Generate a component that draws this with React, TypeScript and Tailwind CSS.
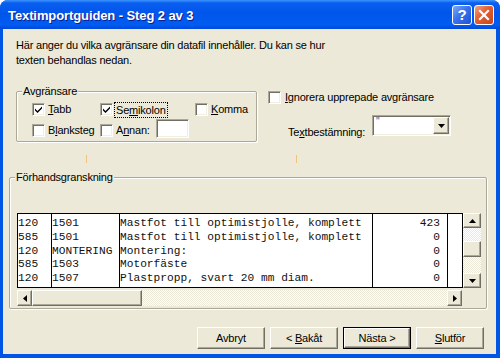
import React from "react";

const raised =
  "border border-t-white border-l-white border-r-[#716F64] border-b-[#716F64] shadow-[inset_-1px_-1px_0_#ACA899] bg-[#ECE9D8]";
const sunken =
  "border border-t-[#ACA899] border-l-[#ACA899] border-r-white border-b-white shadow-[inset_1px_1px_0_#716F64,inset_-1px_-1px_0_#F1EFE2] bg-white";
const track =
  "bg-[repeating-conic-gradient(#ffffff_0_25%,#ECE9D8_0_50%)] bg-[length:2px_2px]";

function Check({ checked }: { checked?: boolean }) {
  return (
    <span className={`w-[13px] h-[13px] shrink-0 flex items-center justify-center ${sunken}`}>
      {checked && (
        <svg width="7" height="7" viewBox="0 0 7 7">
          <path d="M0 2.5 L2.5 5 L7 0.5 L7 2.5 L2.5 7 L0 4.5 Z" fill="#000" />
        </svg>
      )}
    </span>
  );
}

function Arrow({ dir }: { dir: "up" | "down" | "left" | "right" }) {
  const p =
    dir === "up"
      ? "M0 4 L3.5 0 L7 4 Z"
      : dir === "down"
      ? "M0 0 L7 0 L3.5 4 Z"
      : dir === "left"
      ? "M4 0 L4 7 L0 3.5 Z"
      : "M0 0 L4 3.5 L0 7 Z";
  const w = dir === "up" || dir === "down" ? 7 : 4;
  const h = dir === "up" || dir === "down" ? 4 : 7;
  return (
    <svg width={w} height={h} viewBox={`0 0 ${w} ${h}`}>
      <path d={p} fill="#000" />
    </svg>
  );
}

function Btn({ children, def }: { children: React.ReactNode; def?: boolean }) {
  if (def) {
    return (
      <div className="w-[68px] h-[22px] border border-black flex">
        <div className={`flex-1 flex items-center justify-center ${raised}`}>{children}</div>
      </div>
    );
  }
  return (
    <div className={`w-[68px] h-[22px] flex items-center justify-center ${raised}`}>{children}</div>
  );
}

const rows = [
  ["120", "1501", "Mastfot till optimistjolle, komplett", "423"],
  ["585", "1501", "Mastfot till optimistjolle, komplett", "0"],
  ["120", "MONTERING", "Montering:", "0"],
  ["585", "1503", "Motorfäste", "0"],
  ["120", "1507", "Plastpropp, svart 20 mm diam.", "0"],
];

const mono =
  "font-['Liberation_Mono','Courier_New',monospace] text-[11.2px] leading-[13.75px] tracking-normal whitespace-pre pt-[3px] text-[#111]";

export default function App() {
  return (
    <div className="w-[500px] h-[358px] bg-white font-['Liberation_Sans',Arial,sans-serif] text-[11px] text-black tracking-[-0.2px]">
      <div className="w-full h-full rounded-t-[8px] overflow-hidden bg-[#0055E5] flex flex-col">
        {/* Title bar */}
        <div className="h-[29px] shrink-0 flex items-center pl-[8px] pr-[6px] bg-[linear-gradient(to_bottom,#3d95ff_0%,#0a5ff0_10%,#0056ea_45%,#005cf2_85%,#0048d8_100%)]">
          <span className="mt-[2px] text-white font-bold text-[13px] tracking-[-0.1px] [text-shadow:1px_1px_0_#0f1e8a]">
            Textimportguiden - Steg 2 av 3
          </span>
          <div className="ml-auto flex gap-[2px]">
            <div className="w-[20px] h-[20px] rounded-[3px] border border-white bg-[linear-gradient(135deg,#7eaaf9_0%,#3a72ec_45%,#1d52d9_100%)] flex items-center justify-center text-white font-bold text-[15px] leading-none tracking-normal">
              ?
            </div>
            <div className="w-[20px] h-[20px] rounded-[3px] border border-white bg-[linear-gradient(135deg,#f3a283_0%,#e35d2f_45%,#c9441c_100%)] flex items-center justify-center">
              <svg width="12" height="12" viewBox="0 0 12 12">
                <path d="M2 2 L10 10 M10 2 L2 10" stroke="#fff" strokeWidth="2.2" strokeLinecap="square" />
              </svg>
            </div>
          </div>
        </div>

        {/* Client area */}
        <div className="flex-1 ml-[3px] mr-[4px] mb-[4px] bg-[#ECE9D8] flex flex-col">
          <p className="pt-[9px] pl-[13px] leading-[15px]">
            Här anger du vilka avgränsare din datafil innehåller. Du kan se hur
            <br />
            texten behandlas nedan.
          </p>

          {/* Delimiters row */}
          <div className="flex items-start mt-[23px]">
            <div className="relative ml-[13px] w-[241px] h-[51px] border border-[#ACA899] rounded-[2px] shadow-[1px_1px_0_#fff,inset_1px_1px_0_#fff] pt-[11px] pl-[15px] flex flex-col">
              <span className="absolute left-[5px] top-[-7px] px-[1px] bg-[#ECE9D8] leading-[13px]">Avgränsare</span>
              <div className="flex items-center h-[13px]">
                <div className="w-[68px] flex items-center">
                  <Check checked />
                  <span className="ml-[3px]">
                    <span className="underline">T</span>abb
                  </span>
                </div>
                <div className="w-[95px] flex items-center">
                  <Check checked />
                  <span className="ml-[3px] outline-1 outline-dotted outline-black outline-offset-[1px] leading-[12px]">
                    Se<span className="underline">m</span>ikolon
                  </span>
                </div>
                <div className="flex items-center">
                  <Check />
                  <span className="ml-[3px]">
                    <span className="underline">K</span>omma
                  </span>
                </div>
              </div>
              <div className="flex items-center h-[13px] mt-[8px]">
                <div className="w-[68px] flex items-center">
                  <Check />
                  <span className="ml-[3px]">
                    B<span className="underline">l</span>anksteg
                  </span>
                </div>
                <div className="flex items-center">
                  <Check />
                  <span className="ml-[3px]">
                    A<span className="underline">n</span>nan:
                  </span>
                  <div className={`ml-[6px] w-[33px] h-[19px] -mt-[4px] ${sunken}`} />
                </div>
              </div>
            </div>

            <div className="ml-[11px] flex flex-col">
              <div className="flex items-center h-[13px]">
                <Check />
                <span className="ml-[4px]">
                  <span className="underline">I</span>gnorera upprepade avgränsare
                </span>
              </div>
              <div className="flex items-end mt-[11px] ml-[20px]">
                <span className="w-[84px] -mb-[3px] leading-[13px]">
                  Te<span className="underline">x</span>tbestämning:
                </span>
                <div className={`w-[79px] h-[21px] p-[1px] flex ${sunken}`}>
                  <div className="flex-1 pl-[2px] text-[#2a5ad0] text-[10px] leading-[10px] tracking-normal">"</div>
                  <div className={`w-[16px] flex items-center justify-center ${raised}`}>
                    <Arrow dir="down" />
                  </div>
                </div>
              </div>
            </div>
          </div>

          {/* tiny ticks */}
          <div className="flex h-[8px] mt-[13px]">
            <div className="ml-[83px] w-px bg-[#F3C27E]" />
            <div className="ml-[209px] w-px bg-[#F3C27E]" />
          </div>

          {/* Preview groupbox */}
          <div className="relative mt-[14px] ml-[6px] w-[478px] h-[132px] border border-[#ACA899] rounded-[2px] shadow-[1px_1px_0_#fff,inset_1px_1px_0_#fff] pt-[35px] pl-[7px] flex flex-col">
            <span className="absolute left-[5px] top-[-7px] px-[1px] bg-[#ECE9D8] leading-[13px]">Förhandsgranskning</span>
            <div className="flex h-[75px]">
              <div className="flex bg-white border-l border-t border-b border-black">
                <div className="w-[34px] border-r border-black flex flex-col">
                  <div className={mono}>
                    {rows.map((r, i) => (
                      <div key={i}>{r[0]}</div>
                    ))}
                  </div>
                </div>
                <div className="w-[68px] border-r border-black">
                  <div className={mono}>
                    {rows.map((r, i) => (
                      <div key={i}>{r[1]}</div>
                    ))}
                  </div>
                </div>
                <div className="w-[253px] border-r border-black">
                  <div className={mono}>
                    {rows.map((r, i) => (
                      <div key={i}>{r[2]}</div>
                    ))}
                  </div>
                </div>
                <div className="w-[75px] border-r border-black">
                  <div className={`${mono} text-right pr-[7px]`}>
                    {rows.map((r, i) => (
                      <div key={i}>{r[3]}</div>
                    ))}
                  </div>
                </div>
                <div className="w-[15px] border-r border-black" />
              </div>
              {/* vertical scrollbar */}
              <div className="w-[18px] flex flex-col">
                <div className={`h-[15px] flex items-center justify-center ${raised}`}>
                  <Arrow dir="up" />
                </div>
                <div className={`h-[13px] ${track}`} />
                <div className={`h-[16px] ${raised}`} />
                <div className={`flex-1 ${track}`} />
                <div className={`h-[15px] flex items-center justify-center ${raised}`}>
                  <Arrow dir="down" />
                </div>
              </div>
            </div>
            {/* horizontal scrollbar */}
            <div className="flex w-[445px] h-[16px] mt-[2px]">
              <div className={`w-[15px] flex items-center justify-center ${raised}`}>
                <Arrow dir="left" />
              </div>
              <div className={`w-[110px] ${raised}`} />
              <div className={`flex-1 ${track}`} />
              <div className={`w-[15px] flex items-center justify-center ${raised}`}>
                <Arrow dir="right" />
              </div>
            </div>
          </div>

          {/* Buttons */}
          <div className="flex justify-end gap-[5px] pr-[12px] mt-[18px]">
            <Btn>Avbryt</Btn>
            <Btn>
              <span className="whitespace-pre">{"< "}</span>
              <span className="underline">B</span>
              <span>akåt</span>
            </Btn>
            <Btn def>{"Nästa >"}</Btn>
            <Btn>
              <span className="underline">S</span>
              <span>lutför</span>
            </Btn>
          </div>
        </div>
      </div>
    </div>
  );
}
